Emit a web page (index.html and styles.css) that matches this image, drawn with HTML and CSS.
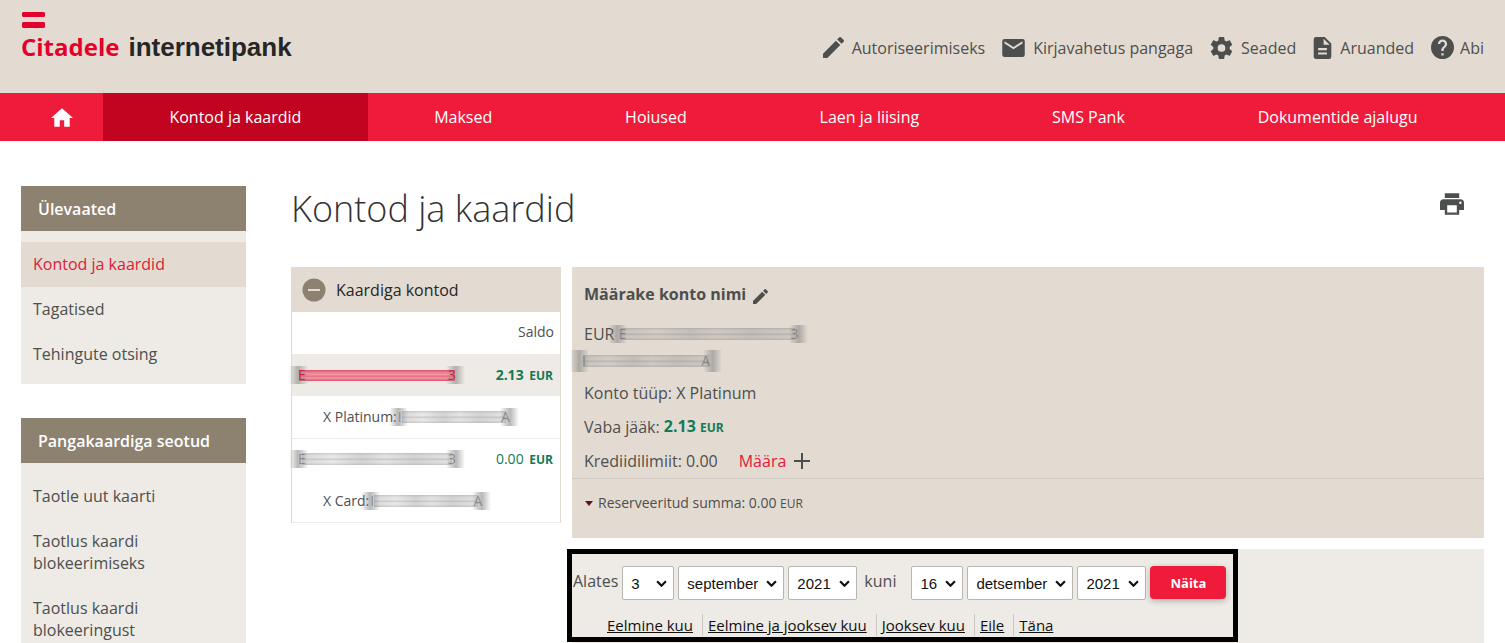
FILE: index.html
```html
<!DOCTYPE html>
<html lang="et">
<head>
<meta charset="utf-8">
<meta name="viewport" content="width=device-width, initial-scale=1">
<title>Citadele internetipank</title>
<link rel="stylesheet" href="styles.css">
</head>
<body>
<header class="header">
  <a class="logo" href="#">
    <svg class="logo-mark" viewBox="0 0 23 16"><path d="M1 0H22L23 1V4L22 5H1L0 4V1ZM1 10H22L23 11V15L22 16H1L0 15V11Z"/></svg>
    <span class="logo-text"><span class="logo-brand">Citadele</span><span class="logo-product">internetipank</span></span>
  </a>
  <nav class="tools">
    <a class="tool" href="#"><svg class="icon" viewBox="3 3 18 18"><path d="M3 17.25V21h3.75L17.81 9.94l-3.75-3.75L3 17.25zM20.71 7.04a1 1 0 0 0 0-1.41l-2.34-2.34a1 1 0 0 0-1.41 0l-1.83 1.83 3.75 3.75 1.83-1.83z"/></svg>Autoriseerimiseks</a>
    <a class="tool" href="#"><svg class="icon icon-mail" viewBox="2 4 20 16"><path d="M20 4H4a2 2 0 0 0-2 2v12c0 1.100.9 2 2 2h16a2 2 0 0 0 2-2V6a2 2 0 0 0-2-2zm0 4-8 5-8-5V6l8 5 8-5v2z"/></svg>Kirjavahetus pangaga</a>
    <a class="tool" href="#"><svg class="icon icon-gear" viewBox="2 2 20 20"><path d="M19.430 12.980c.04-.32.07-.64.07-.98s-.03-.66-.07-.98l2.110-1.650c.19-.15.24-.42.12-.64l-2-3.460c-.12-.22-.39-.3-.61-.22l-2.490 1c-.52-.4-1.080-.73-1.690-.98l-.38-2.650A.49.49 0 0 0 14 2h-4c-.25 0-.46.18-.49.42l-.38 2.650c-.61.25-1.170.59-1.690.98l-2.490-1c-.23-.09-.49 0-.61.22l-2 3.460c-.13.22-.07.49.12.64l2.110 1.650c-.04.32-.07.65-.07.98s.03.66.07.98l-2.110 1.650c-.19.15-.24.42-.12.64l2 3.460c.12.22.39.3.61.22l2.490-1c.52.4 1.080.73 1.690.98l.38 2.650c.03.24.24.42.49.42h4c.25 0 .46-.18.49-.42l.38-2.650c.61-.25 1.170-.59 1.690-.98l2.490 1c.23.09.49 0 .61-.22l2-3.460c.12-.22.07-.49-.12-.64zM12 15.500a3.500 3.500 0 1 1 0-7 3.500 3.500 0 0 1 0 7z"/></svg>Seaded</a>
    <a class="tool" href="#"><svg class="icon icon-doc" viewBox="4 2 16 20"><path d="M14 2H6a2 2 0 0 0-2 2v16c0 1.100.89 2 2 2h12a2 2 0 0 0 2-2V8zm2 16H8v-2h8zm0-4H8v-2h8zm-3-5V3.500L18.500 9z"/></svg>Aruanded</a>
    <a class="tool tool-help" href="#"><svg class="icon icon-help" viewBox="2 2 20 20"><path d="M12 2a10 10 0 1 0 0 20 10 10 0 0 0 0-20zm1 17h-2v-2h2zm2.070-7.750-.9.920C13.450 12.900 13 13.500 13 15h-2v-.5c0-1.100.45-2.100 1.170-2.830l1.240-1.260c.37-.36.59-.86.59-1.410a2 2 0 1 0-4 0H8a4 4 0 1 1 8 0c0 .88-.36 1.680-.93 2.250z"/></svg>Abi</a>
  </nav>
</header>
<nav class="menu">
  <a class="menu-home" href="#" aria-label="Avaleht"><svg viewBox="2 3 20 17"><path d="M10 20v-6h4v6h5v-8h3L12 3 2 12h3v8z"/></svg></a>
  <a class="menu-item menu-active" href="#">Kontod ja kaardid</a>
  <a class="menu-item" href="#">Maksed</a>
  <a class="menu-item" href="#">Hoiused</a>
  <a class="menu-item" href="#">Laen ja liising</a>
  <a class="menu-item" href="#">SMS Pank</a>
  <a class="menu-item" href="#">Dokumentide ajalugu</a>
</nav>
<div class="page">
  <aside class="sidebar">
    <section class="side-box">
      <h2 class="side-title">Ülevaated</h2>
      <div class="side-links">
        <a class="side-link side-current" href="#">Kontod ja kaardid</a>
        <a class="side-link" href="#">Tagatised</a>
        <a class="side-link" href="#">Tehingute otsing</a>
      </div>
    </section>
    <section class="side-box side-grow">
      <h2 class="side-title">Pangakaardiga seotud</h2>
      <div class="side-links side-spaced">
        <a class="side-link" href="#">Taotle uut kaarti</a>
        <a class="side-link" href="#">Taotlus kaardi blokeerimiseks</a>
        <a class="side-link" href="#">Taotlus kaardi blokeeringust</a>
      </div>
    </section>
  </aside>
  <main class="main">
    <div class="heading">
      <h1 class="title">Kontod ja kaardid</h1>
      <button class="print" type="button" aria-label="Prindi"><svg viewBox="2 3 20 18"><path d="M19 8H5a3 3 0 0 0-3 3v6h4v4h12v-4h4v-6a3 3 0 0 0-3-3zm-3 11H8v-6h8zm3-7a1 1 0 1 1 0-2 1 1 0 0 1 0 2zM18 3H6v4h12z"/></svg></button>
    </div>
    <div class="columns">
      <section class="accounts">
        <h2 class="accounts-title"><svg class="minus" viewBox="0 0 24 24"><circle cx="12" cy="12" r="11.500"/><path d="M6 12H18"/></svg>Kaardiga kontod</h2>
        <table class="accounts-table">
          <thead><tr><th colspan="2">Saldo</th></tr></thead>
          <tbody>
            <tr class="row-current"><td class="number"><a class="smudge smudge-red smudge-iban" href="#"><span>E</span><span>3</span></a></td><td class="amount"><b>2.13</b> <b class="currency">EUR</b></td></tr>
            <tr class="row-card"><td colspan="2"><div class="card-line">X Platinum:<span class="smudge smudge-name"><span>I</span><span>A</span></span></div></td></tr>
            <tr><td class="number"><a class="smudge smudge-iban" href="#"><span>E</span><span>3</span></a></td><td class="amount">0.00 <b class="currency">EUR</b></td></tr>
            <tr class="row-card"><td colspan="2"><div class="card-line">X Card:<span class="smudge smudge-name"><span>I</span><span>A</span></span></div></td></tr>
          </tbody>
        </table>
      </section>
      <div class="details-column">
        <section class="details">
          <div class="details-body">
            <div class="line line-name"><b>Määrake konto nimi</b><svg class="pencil" viewBox="3 3 18 18"><path d="M3 17.25V21h3.75L17.81 9.94l-3.75-3.75L3 17.25zM20.71 7.04a1 1 0 0 0 0-1.41l-2.34-2.34a1 1 0 0 0-1.41 0l-1.83 1.83 3.75 3.75 1.83-1.83z"/></svg></div>
            <div class="line line-iban">EUR<span class="smudge smudge-account"><span>E</span><span>3</span></span></div>
            <div class="line line-owner"><span class="smudge smudge-owner"><span>I</span><span>A</span></span></div>
            <div class="line">Konto tüüp: X Platinum</div>
            <div class="line">Vaba jääk:&nbsp;<b class="money">2.13 <small>EUR</small></b></div>
            <div class="line">Krediidilimiit: 0.00<a class="set-limit" href="#">Määra<svg viewBox="0 0 16 16"><path d="M8 0V16M0 8H16"/></svg></a></div>
          </div>
          <div class="reserved"><svg class="caret" viewBox="0 0 8 5"><path d="M0 0H8L4 5Z"/></svg>Reserveeritud summa: 0.00&nbsp;<small>EUR</small></div>
        </section>
        <section class="statement">
          <form class="filter">
            <div class="dates">
              <label for="d1">Alates</label>
              <div class="selects">
                <select id="d1" class="select select-day"><option>3</option></select>
                <select class="select select-month" aria-label="Alates kuu"><option>september</option></select>
                <select class="select select-year" aria-label="Alates aasta"><option>2021</option></select>
              </div>
              <label class="until" for="d2">kuni</label>
              <div class="selects">
                <select id="d2" class="select select-day"><option>16</option></select>
                <select class="select select-month" aria-label="Kuni kuu"><option>detsember</option></select>
                <select class="select select-year" aria-label="Kuni aasta"><option>2021</option></select>
                <button class="show" type="button">Näita</button>
              </div>
            </div>
            <div class="periods">
              <a href="#">Eelmine kuu</a>
              <a href="#">Eelmine ja jooksev kuu</a>
              <a href="#">Jooksev kuu</a>
              <a href="#">Eile</a>
              <a href="#">Täna</a>
            </div>
          </form>
        </section>
      </div>
    </div>
  </main>
</div>
</body>
</html>
```
FILE: styles.css
```css
* { box-sizing: border-box; }
body {
  margin: 0;
  min-height: 100vh;
  display: flex;
  flex-direction: column;
  background: #fff;
  color: #4d4f4f;
  font: 16px/22px "Open Sans", "Noto Sans", sans-serif;
}
a { color: inherit; text-decoration: none; }
svg { display: block; flex: none; fill: currentColor; }
h1, h2 { margin: 0; font-weight: 400; }

.header {
  display: flex;
  justify-content: space-between;
  align-items: flex-start;
  height: 93px;
  padding: 12px 21px 0;
  background: #e3dbd1;
}
.logo-mark { width: 23px; height: 16px; margin-left: 1px; color: #e4002b; }
.logo-text { display: flex; align-items: baseline; gap: 9px; padding-top: 3px; line-height: 32px; font-weight: 700; }
.logo-brand { color: #e4002b; font-size: 24px; }
.logo-product { color: #262626; font-family: "Liberation Sans", Arial, sans-serif; font-size: 26px; }
.tools { display: flex; gap: 17px; padding-top: 24px; }
.tool { display: flex; align-items: center; gap: 8px; }
.tool-help { gap: 6px; }
.icon { width: 21px; height: 21px; }
.icon-mail { width: 23px; height: 18px; }
.icon-gear { width: 23px; height: 22px; }
.icon-doc { width: 19px; height: 22px; }
.icon-help { width: 23px; height: 23px; }

.menu { display: flex; height: 48px; padding: 0 21px; background: #ee1b3b; color: #fff; font-weight: 500; }
.menu-home { width: 82px; display: flex; align-items: center; justify-content: center; }
.menu-home svg { width: 22px; height: 19px; }
.menu-item { flex: 1 1 auto; display: flex; align-items: center; justify-content: center; }
.menu-active { background: #c20421; }

.page { flex: 1; display: flex; gap: 45px; padding: 0 21px; }
.sidebar { width: 225px; flex: none; display: flex; flex-direction: column; gap: 34px; padding-top: 45px; }
.side-box { background: #eeeae5; }
.side-grow { flex: 1; }
.side-title { padding: 12px 17px 11px; background: #8d8170; color: #fff; font-size: 16px; line-height: 22px; font-weight: 600; }
.side-links { display: flex; flex-direction: column; padding: 11px 0 7px; }
.side-link { padding: 11px 60px 12px 12px; }
.side-current { background: #e3dbd1; color: #e01a38; }
.side-spaced { padding-bottom: 0; }

.main { flex: 1; min-width: 0; display: flex; flex-direction: column; }
.heading { display: flex; justify-content: space-between; padding: 44px 20px 34px 0; }
.title { font-size: 36px; line-height: 48px; font-weight: 300; color: #333; }
.print { align-self: flex-start; margin-top: 8px; padding: 0; border: 0; background: none; color: #4d4f4f; }
.print svg { width: 24px; height: 22px; }
.columns { flex: 1; display: flex; gap: 11px; }

.accounts { width: 270px; flex: none; align-self: flex-start; border: solid #e3dbd1; border-width: 0 1px; }
.accounts-title { display: flex; align-items: center; gap: 10px; height: 45px; padding-left: 10px; background: #e3dbd1; color: #262626; font-size: 16px; line-height: 22px; }
.minus { width: 24px; height: 24px; fill: #8d8170; stroke: #e3dbd1; stroke-width: 2; }
.minus circle { stroke: none; }
.accounts-table { width: 100%; border-collapse: collapse; font-size: 14px; line-height: 20px; }
.accounts-table th { height: 42px; padding: 0 6px 2px; font-weight: 400; text-align: right; }
.accounts-table td { height: 42px; padding: 0; }
.accounts-table .row-current { background: #eeeae5; }
.accounts-table .row-card { border-bottom: 1px solid #eeeae5; }
.accounts-table .amount { padding-right: 7px; text-align: right; color: #147a55; white-space: nowrap; }
.accounts-table .currency { padding-left: 2px; font-size: 12px; }
.card-line { display: flex; align-items: center; padding-left: 31px; }

/* Concealed account numbers and names */
.smudge {
  display: flex;
  justify-content: space-between;
  align-items: center;
  height: 18px;
  padding: 0 9px;
  overflow: hidden;
  font-size: 14px;
  line-height: 18px;
  color: #66666699;
  background:
    linear-gradient(90deg, #88888800, #88888899 9px, #88888866 13px, #88888800 19px) left / 20px 100% no-repeat,
    linear-gradient(270deg, #88888800, #88888899 9px, #88888866 13px, #88888800 19px) right / 20px 100% no-repeat,
    linear-gradient(90deg, #99999933, #99999900 20%, #99999944 40%, #99999911 55%, #99999944 75%, #99999911) center / calc(100% - 26px) 12px no-repeat,
    linear-gradient(#77777766, #99999944 2px, #99999933 5px, #77777766 6px, #99999933 8px, #99999944 10px, #77777766) center / calc(100% - 26px) 12px no-repeat;
}
.smudge-red {
  color: #cc223f;
  background:
    linear-gradient(90deg, #88888800, #88888899 9px, #88888866 13px, #88888800 19px) left / 20px 100% no-repeat,
    linear-gradient(270deg, #88888800, #88888899 9px, #88888866 13px, #88888800 19px) right / 20px 100% no-repeat,
    linear-gradient(#dd5268, #ee8798 3px, #ee9aa8 5px, #e8687c 6px, #ee9aa8 8px, #dd5268) center / calc(100% - 20px) 11px no-repeat;
}
.smudge-iban { width: 176px; margin-left: -3px; }
.smudge-name { width: 130px; margin-left: -8px; }
.smudge-account { width: 200px; margin-left: -6px; padding: 0 10px; }
.smudge-owner { width: 152px; height: 22px; margin-left: -14px; padding: 0 12px; }

.details-column { flex: 1; min-width: 0; display: flex; flex-direction: column; gap: 11px; }
.details { background: #e3dbd1; }
.details-body { display: flex; flex-direction: column; gap: 12px; padding: 16px 12px 6px; border-bottom: 1px solid #d0cac2; }
.line { display: flex; align-items: center; height: 22px; }
.line-name { gap: 7px; margin-bottom: 6px; }
.pencil { width: 15px; height: 15px; margin-top: 4px; }
.line-iban { margin-bottom: -7px; }
.line-owner { margin-bottom: -2px; }
.money { color: #147a55; }
.money small { font-size: 12px; }
.set-limit { display: flex; align-items: center; gap: 8px; margin-left: 21px; color: #e01a38; }
.set-limit svg { width: 16px; height: 16px; stroke: #4d4f4f; stroke-width: 2; }
.reserved { display: flex; align-items: baseline; padding: 14px 13px 24px; font-size: 14px; line-height: 20px; }
.reserved small { font-size: 12px; }
.caret { width: 8px; height: 5px; margin-right: 5px; align-self: center; color: #5a1420; }

.statement { flex: 1; background: #eeeae5; }
.filter { width: 671px; max-width: 100%; margin-left: -5px; border: 5px solid #000; padding: 12px 0 1px 1px; }
.dates { display: flex; align-items: center; }
.dates label { margin-right: 4px; padding-bottom: 4px; }
.dates .until { margin: 0 15px 0 7px; }
.selects { display: flex; gap: 4px; }
.select {
  appearance: none;
  height: 34px;
  padding: 0 8px;
  border: 1px solid #b9b5b0;
  border-radius: 2px;
  color: #111;
  background: #fff url("data:image/svg+xml,%3Csvg xmlns='http://www.w3.org/2000/svg' viewBox='0 0 10 6'%3E%3Cpath d='M1 1L5 5L9 1' fill='none' stroke='%23111' stroke-width='2'/%3E%3C/svg%3E") right 6px center / 11px 7px no-repeat;
  font: 15px "Liberation Sans", Arial, sans-serif;
}
.select-day { width: 52px; }
.select-month { width: 106px; }
.select-year { width: 69px; }
.show { width: 76px; height: 33px; padding: 0; border: 0; border-radius: 4px; background: #ee1b3b; color: #fff; font: 700 13px/20px "Open Sans", sans-serif; box-shadow: 0 2px 6px #00000040; }
.periods { display: flex; padding: 14px 0 0 34px; color: #111; font-size: 15px; line-height: 22px; }
.periods a { text-decoration: underline; }
.periods a + a { margin-left: 9px; padding-left: 5px; border-left: 1px solid #cbc7c2; }
```
